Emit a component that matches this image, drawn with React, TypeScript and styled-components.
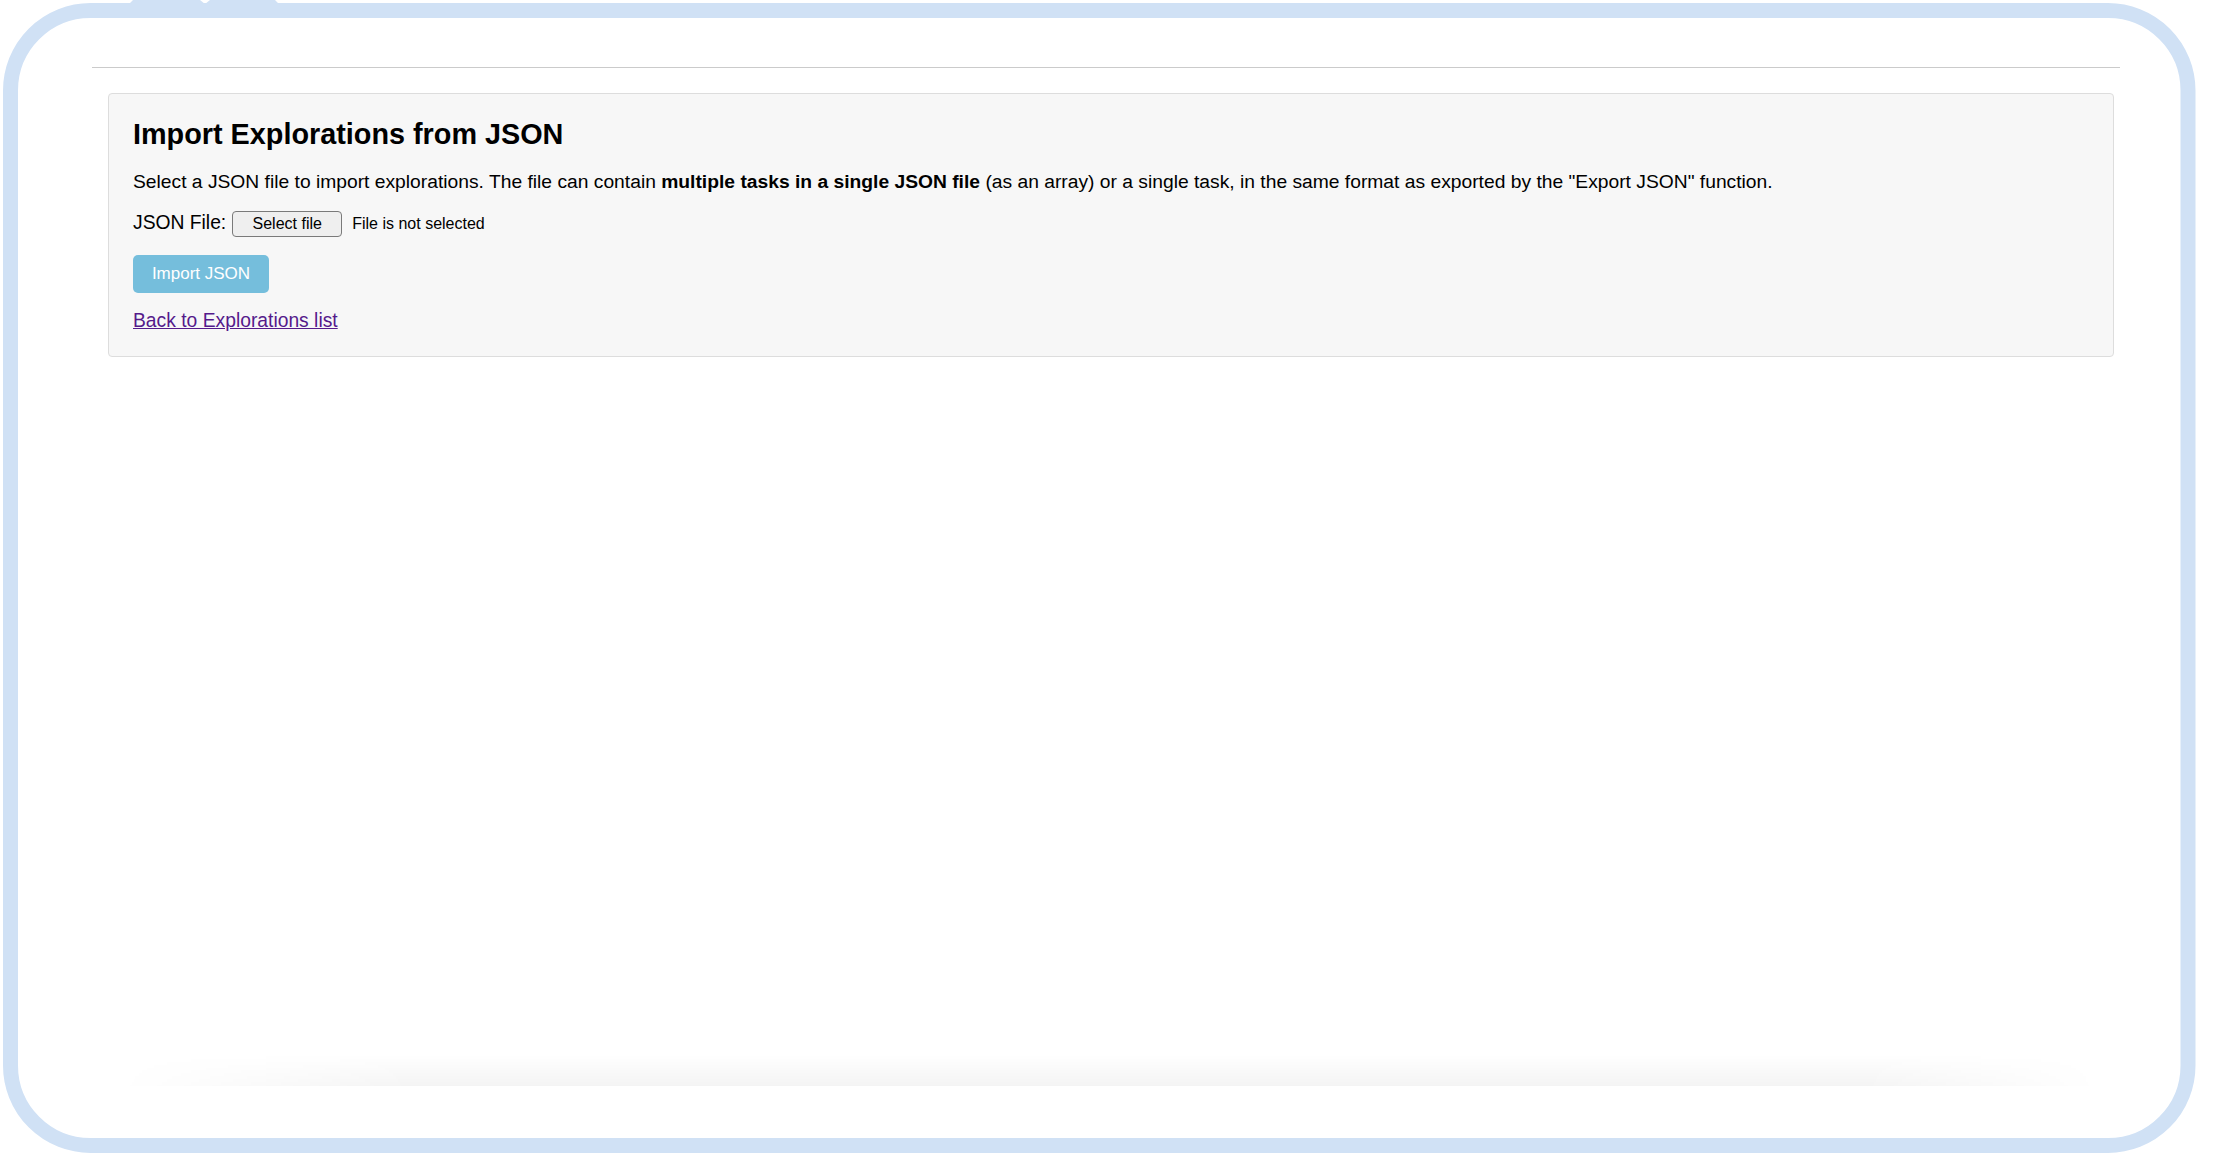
import React from "react";
import styled, { createGlobalStyle } from "styled-components";

const GlobalStyle = createGlobalStyle`
  html, body {
    margin: 0;
    padding: 0;
    background: #ffffff;
  }
  body {
    font-family: "Liberation Sans", Arial, Helvetica, sans-serif;
    color: #000000;
  }
`;

const Page = styled.div`
  box-sizing: border-box;
  min-height: 100vh;
  display: flex;
  flex-direction: column;
  padding: 67px 99px 0 92px;
`;

const Rule = styled.hr`
  margin: 0;
  border: 0;
  border-top: 1px solid #cbcbcb;
`;

const Card = styled.section`
  margin: 25px 6px 0 16px;
  background: #f7f7f7;
  border: 1px solid #dddddd;
  border-radius: 4px;
  padding: 23px 24px 24px;
`;

const Title = styled.h2`
  margin: 0;
  font-size: 28.8px;
  line-height: 34px;
  font-weight: 700;
`;

const Intro = styled.p`
  margin: 20px 0 0;
  font-size: 19.25px;
  line-height: 22px;

  strong {
    font-weight: 700;
  }
`;

const FileRow = styled.div`
  display: flex;
  align-items: baseline;
  margin-top: 18px;
`;

const FieldLabel = styled.label`
  font-size: 19.3px;
  line-height: 22px;
  margin-right: 6px;
`;

const FileButton = styled.button`
  box-sizing: border-box;
  width: 110px;
  height: 26px;
  padding: 3px 0;
  border: 1px solid #7a7a7a;
  border-radius: 4px;
  background: #efefef;
  color: #000000;
  font-family: inherit;
  font-size: 16px;
  line-height: 18px;
  text-align: center;
`;

const FileStatus = styled.span`
  margin-left: 10px;
  font-size: 16px;
  line-height: 18px;
`;

const SubmitButton = styled.button`
  display: block;
  box-sizing: border-box;
  margin-top: 18px;
  width: 136px;
  height: 38px;
  padding: 0;
  border: 0;
  border-radius: 5px;
  background: #75bedc;
  color: #ffffff;
  font-family: inherit;
  font-size: 17px;
  line-height: 20px;
`;

const LinkRow = styled.div`
  margin-top: 17px;
  font-size: 19.3px;
  line-height: 22px;
`;

const BackLink = styled.a`
  color: #551a8b;
  text-decoration: underline;
`;

const Spacer = styled.div`
  flex: 1;
`;

const Shade = styled.div`
  height: 31px;
  margin: 0 20px 68px 25px;
  background: linear-gradient(to bottom, rgba(0, 0, 0, 0), rgba(0, 0, 0, 0.045));
  -webkit-mask-image: linear-gradient(to right, transparent 0%, #000 15%, #000 88%, transparent 100%);
  mask-image: linear-gradient(to right, transparent 0%, #000 15%, #000 88%, transparent 100%);
`;

const FrameSvg = styled.svg`
  position: fixed;
  inset: 0;
  width: 100vw;
  height: 100vh;
  pointer-events: none;
`;

function DeviceFrame() {
  return (
    <FrameSvg viewBox="0 0 2219 1154" preserveAspectRatio="none">
      <rect
        x="10.5"
        y="10.5"
        width="2177.5"
        height="1135"
        rx="80"
        ry="80"
        fill="none"
        stroke="#d0e1f5"
        strokeWidth="15"
      />
      <path
        d="M128 5 L133 0 L200 0 L205 4 L210 0 L275 0 L280 5 Z"
        fill="#d0e1f5"
      />
      <rect x="192" y="16" width="26" height="2" fill="#d0e1f5" />
    </FrameSvg>
  );
}

export default function App() {
  return (
    <>
      <GlobalStyle />
      <Page>
        <Rule />
        <Card>
          <Title>Import Explorations from JSON</Title>
          <Intro>
            Select a JSON file to import explorations. The file can contain{" "}
            <strong>multiple tasks in a single JSON file</strong> (as an array) or a
            single task, in the same format as exported by the "Export JSON" function.
          </Intro>
          <FileRow>
            <FieldLabel htmlFor="json-file">JSON File:</FieldLabel>
            <FileButton id="json-file" type="button">
              Select file
            </FileButton>
            <FileStatus>File is not selected</FileStatus>
          </FileRow>
          <SubmitButton type="button">Import JSON</SubmitButton>
          <LinkRow>
            <BackLink href="#">Back to Explorations list</BackLink>
          </LinkRow>
        </Card>
        <Spacer />
        <Shade />
      </Page>
      <DeviceFrame />
    </>
  );
}
